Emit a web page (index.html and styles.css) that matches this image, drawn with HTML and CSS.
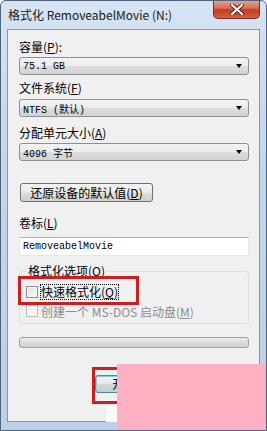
FILE: index.html
```html
<!DOCTYPE html>
<html lang="zh-CN">
<head>
    <meta charset="UTF-8">
    <title>格式化 RemoveabelMovie (N:)</title>
    <link rel="stylesheet" href="styles.css">
</head>
<body>

<div class="window">
    <div class="titlebar">
        <span class="title">格式化 RemoveabelMovie (N:)</span>
        <div class="close-btn">
            <svg width="14" height="11" viewBox="0 0 14 11">
                <path d="M2 1 L12 10 M12 1 L2 10" stroke="#5a1d18" stroke-width="4" stroke-linecap="round"/>
                <path d="M2 1 L12 10 M12 1 L2 10" stroke="#ffffff" stroke-width="2.2" stroke-linecap="round"/>
            </svg>
        </div>
    </div>

    <div class="client">
        <div class="label first">容量(<u>P</u>):</div>
        <div class="combo"><span>75.1 GB</span><span class="arrow"></span></div>

        <div class="label l2">文件系统(<u>F</u>)</div>
        <div class="combo c2"><span>NTFS (默认)</span><span class="arrow"></span></div>

        <div class="label l3">分配单元大小(<u>A</u>)</div>
        <div class="combo"><span>4096 字节</span><span class="arrow"></span></div>

        <button class="btn reset">还原设备的默认值(<u>D</u>)</button>

        <div class="label l4">卷标(<u>L</u>)</div>
        <div class="textbox">RemoveabelMovie</div>

        <fieldset class="group">
            <legend>格式化选项(<u>O</u>)</legend>
            <div class="check-row first-row">
                <span class="checkbox"></span>
                <span class="focus">快速格式化(<u>Q</u>)</span>
            </div>
            <div class="check-row disabled">
                <span class="checkbox"></span>
                <span>创建一个 MS-DOS 启动盘(<u>M</u>)</span>
            </div>
        </fieldset>

        <div class="progress"></div>

        <div class="actions">
            <button class="btn action default">开始(<u>S</u>)</button>
            <button class="btn action">关闭(<u>C</u>)</button>
        </div>
    </div>

    <!-- annotations drawn over the dialog -->
    <div class="mark mark-quick"></div>
    <div class="mark mark-start"></div>
    <div class="smudge"></div>
    <div class="cover"></div>
</div>

</body>
</html>
```

FILE: styles.css
```css
body {
    margin: 0;
    background-color: #ffffff;
    font-family: "Noto Sans CJK SC", "Liberation Sans", sans-serif;
    font-size: 12px;
    color: #000;
}

.window {
    position: relative;
    width: 267px;
    height: 431px;
    box-sizing: border-box;
    border: 1px solid #50637c;
    border-radius: 6px 6px 0 0;
    background: linear-gradient(#d6e4f3, #c2d5eb 40%, #bcd0e8);
    padding: 0 6px 8px 6px;
    display: flex;
    flex-direction: column;
    overflow: hidden;
}

.titlebar {
    height: 28px;
    display: flex;
    justify-content: space-between;
    align-items: flex-start;
}

.title {
    line-height: 28px;
    padding-left: 1px;
    color: #1a1a1a;
}

.close-btn {
    width: 47px;
    height: 19px;
    margin-top: -1px;
    box-sizing: border-box;
    border: 1px solid #7a2a22;
    border-top: none;
    border-radius: 0 0 5px 5px;
    background: linear-gradient(#e8a493, #d7705a 45%, #c23b22 55%, #d6603f);
    display: flex;
    align-items: center;
    justify-content: center;
}

.client {
    flex: 1;
    background-color: #f0f0f0;
    border: 1px solid #8197b3;
    padding: 9px 10px 0 11px;
}

.label {
    line-height: 16px;
    height: 16px;
    white-space: nowrap;
}

.l2 { margin-top: 5px; }
.l3 { margin-top: 8px; }
.l4 { margin-top: 13px; }

.combo {
    margin-top: 2px;
    height: 18px;
    box-sizing: border-box;
    border: 1px solid #8e8f8f;
    border-radius: 3px;
    background: linear-gradient(#f3f3f3, #ebebeb 50%, #dddddd 51%, #d3d3d3);
    display: flex;
    align-items: center;
    justify-content: space-between;
    padding: 0 6px 0 3px;
    font-family: "Liberation Mono", "Noto Sans CJK SC", monospace;
    font-size: 10px;
}

.combo.c2 {
    margin-top: 3px;
}

.arrow {
    width: 0;
    height: 0;
    border-left: 3.5px solid transparent;
    border-right: 3.5px solid transparent;
    border-top: 4px solid #000;
}

.btn {
    font-family: "Noto Sans CJK SC", "Liberation Sans", sans-serif;
    font-size: 12px;
    color: #000;
    box-sizing: border-box;
    border: 1px solid #707070;
    border-radius: 3px;
    background: linear-gradient(#f2f2f2, #ebebeb 50%, #dddddd 51%, #cfcfcf);
    padding: 0;
    line-height: 16px;
}

.reset {
    display: block;
    margin: 22px 0 0 1px;
    width: 133px;
    height: 19px;
}

.textbox {
    margin-top: 6px;
    height: 19px;
    box-sizing: border-box;
    border: 1px solid #e3e9ef;
    border-top-color: #abadb3;
    background-color: #fff;
    padding-left: 3px;
    line-height: 17px;
    font-family: "Liberation Mono", monospace;
    font-size: 10px;
}

.group {
    margin: 7px 0 0 0;
    padding: 0 6px 4px 6px;
    border: 1px solid #d5dfe5;
    border-radius: 3px;
}

.group legend {
    padding: 0 2px;
    line-height: 16px;
    color: #000;
}

.check-row {
    display: flex;
    align-items: center;
    gap: 3px;
    height: 16px;
    margin-top: 3px;
    white-space: nowrap;
}

.check-row.first-row {
    margin-top: 5px;
}

.checkbox {
    width: 12px;
    height: 12px;
    box-sizing: border-box;
    border: 1px solid #8e8f8f;
    background: linear-gradient(135deg, #dcdcdc, #fbfbfb);
    box-shadow: inset 0 0 0 1px #f4f4f4;
}

.focus {
    outline: 1px dotted #000;
    outline-offset: 0;
    line-height: 14px;
}

.disabled {
    color: #8d8d8d;
}

.disabled .checkbox {
    border-color: #bcbcbc;
    background: #f4f4f4;
}

.progress {
    margin-top: 13px;
    height: 11px;
    box-sizing: border-box;
    border: 1px solid #a0a0a0;
    border-radius: 3px;
    background: linear-gradient(#eaeaea, #dcdcdc 50%, #cfcfcf);
}

.actions {
    margin-top: 27px;
    display: flex;
    justify-content: flex-end;
    gap: 6px;
}

.action {
    width: 74px;
    height: 18px;
}

.default {
    border-color: #3c8fa8;
    box-shadow: inset 0 1px 0 #7fd3e6, inset 1px 0 0 #7fd3e6;
    background: linear-gradient(#f4f4f4, #e6e6e6 50%, #d6d6d6 51%, #cbcbcb);
}

.mark {
    position: absolute;
    box-sizing: border-box;
    border: 3px solid #cc1d23;
}

.mark-quick {
    left: 17px;
    top: 275px;
    width: 121px;
    height: 29px;
}

.mark-start {
    left: 91px;
    top: 366px;
    width: 40px;
    height: 37px;
}

.smudge {
    position: absolute;
    left: 105px;
    top: 405px;
    width: 11px;
    height: 16px;
    background-color: #fbfbfb;
}

.cover {
    position: absolute;
    left: 116px;
    top: 363px;
    right: 0;
    bottom: 0;
    background-color: #ffb1c4;
}
```
